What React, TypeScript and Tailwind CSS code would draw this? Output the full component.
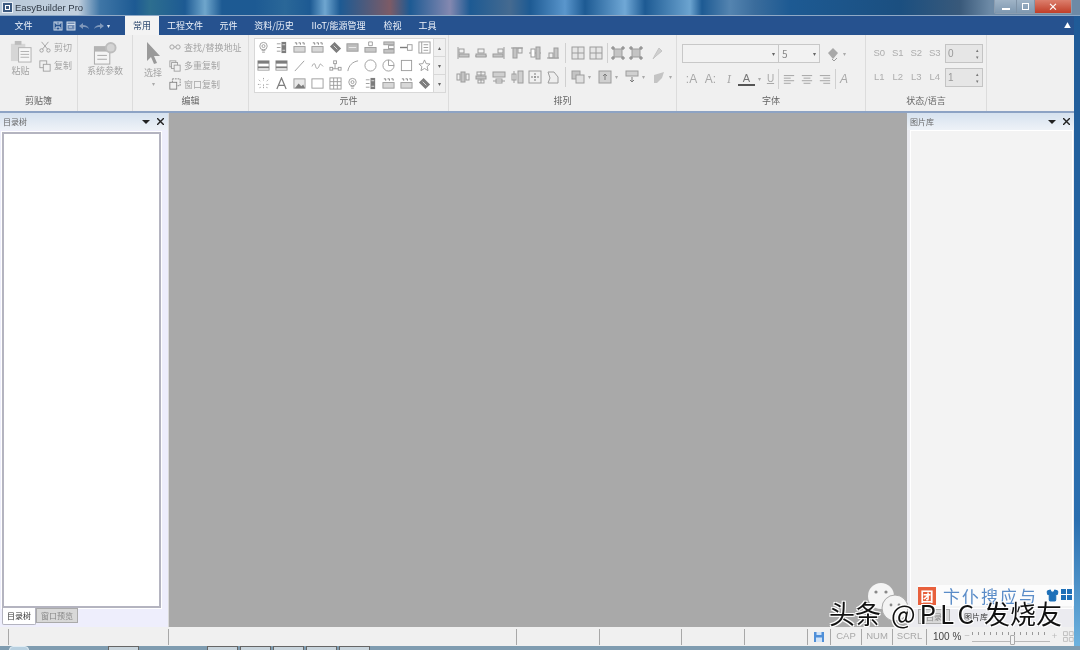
import type { ReactNode } from 'react';
import { Shirt } from 'lucide-react';

const font = "font-['Noto_Sans_CJK_SC','Noto_Sans',sans-serif]";

const tabs = [
  { label: '工程文件', w: 'w-[52px]' },
  { label: '元件', w: 'w-[35px]' },
  { label: '资料/历史', w: 'w-[56px]' },
  { label: 'IIoT/能源管理', w: 'w-[73px]' },
  { label: '检视', w: 'w-[35px]' },
  { label: '工具', w: 'w-[35px]' },
];

const g = '#9c9c9c';
const d = '#7d7d7d';

const Ico = ({ children, size = 14 }: { children: ReactNode; size?: number }) => (
  <svg width={size} height={size} viewBox="0 0 14 14" fill="none" stroke={g} strokeWidth="1" className="shrink-0">
    {children}
  </svg>
);

const bulb = <><circle cx="7" cy="5.5" r="4" /><circle cx="7" cy="5.5" r="1.6" /><path d="M5 10h4M5.5 12h3" /></>;
const meter = <><rect x="7" y="1" width="5" height="12" fill={d} stroke="none" /><path d="M2 3h4M2 7h4M2 11h4" /><path d="M8 4h3M8 10h3" stroke="#ddd" /></>;
const digits = <><path d="M2 2h2v2M6 2h2v2M10 2h2v2" stroke={d} /><rect x="1" y="6" width="12" height="6" fill="#d8d8d8" /></>;
const tag = <><path d="M1 6l5-5 7 7-5 5z" fill={d} stroke="none" /><path d="M5 5l4 4" stroke="#ddd" /></>;
const plate = <><rect x="1" y="3" width="12" height="8" fill="#bdbdbd" /><path d="M3 7h8" stroke="#eee" /></>;
const fnBox = <><path d="M5 1h4v4H5z" /><rect x="1" y="7" width="12" height="5" fill="#c8c8c8" /></>;
const stack = <><rect x="2" y="1" width="11" height="3" fill="#c4c4c4" /><rect x="7" y="5" width="6" height="3" /><rect x="2" y="9" width="11" height="4" fill="#c4c4c4" /></>;
const key = <><path d="M0 7h8" strokeWidth="1.5" stroke={d} /><rect x="8" y="4" width="5" height="6" /></>;
const listDoc = <><rect x="1" y="1" width="12" height="12" /><path d="M4 1v12M6 4h5M6 7h5M6 10h5" /></>;
const table1 = <><rect x="1" y="2" width="12" height="10" /><rect x="1" y="2" width="12" height="3" fill={d} stroke="none" /><rect x="1" y="8" width="12" height="2" fill={d} stroke="none" /></>;
const line = <path d="M2 13L12 2" />;
const wave = <path d="M1 8c2-4 3-4 4 0s3 2 4-1 2-1 4 1" />;
const nodes = <><rect x="1" y="9" width="3" height="3" /><rect x="10" y="9" width="3" height="3" /><rect x="5" y="2" width="3" height="3" /><path d="M6.5 5v5.5M4 10.5h6" /></>;
const arc = <path d="M2 13C3 7 7 3 13 2" />;
const circle = <circle cx="7" cy="7" r="6" />;
const pie = <><circle cx="7" cy="7" r="6" /><path d="M7 1v6h6" /></>;
const square = <rect x="1.5" y="1.5" width="11" height="11" />;
const star = <path d="M7 1l1.8 4 4.2.4-3.2 2.8 1 4.3L7 10.2 3.2 12.5l1-4.3L1 5.4 5.2 5z" />;
const burst = <path d="M7 1v3M7 8v5M2 3l2 2M12 3l-2 2M1 8h3M10 8h3M3 12l1-2M11 12l-1-2" strokeDasharray="1.5 1" />;
const letterA = <path d="M2 13L7 1l5 12M4 9h6" strokeWidth="1.3" stroke={d} />;
const image = <><rect x="1" y="2" width="12" height="10" fill="#e8e8e8" /><path d="M2 12l4-5 3 3 2-2 2 4z" fill={d} stroke="none" /></>;
const rect = <rect x="1" y="2" width="12" height="10" />;
const grid = <><rect x="1" y="1" width="12" height="12" /><path d="M5 1v12M9 1v12M1 5h12M1 9h12" /></>;

const gallery = [
  bulb, meter, digits, digits, tag, plate, fnBox, stack, key, listDoc,
  table1, table1, line, wave, nodes, arc, circle, pie, square, star,
  burst, letterA, image, rect, grid, bulb, meter, digits, digits, tag,
];

const arrangeTop = [
  <><path d="M2 1v12" /><rect x="3" y="8" width="10" height="3" fill="#c4c4c4" /><rect x="3" y="3" width="5" height="4" /></>,
  <><path d="M1 10h12" /><rect x="2" y="8" width="10" height="3" fill="#c4c4c4" /><rect x="4" y="3" width="6" height="4" /></>,
  <><path d="M12 1v12" /><rect x="1" y="8" width="10" height="3" fill="#c4c4c4" /><rect x="6" y="3" width="5" height="4" /></>,
  <><path d="M1 2h12" /><rect x="3" y="2" width="4" height="10" fill="#c4c4c4" /><rect x="8" y="2" width="4" height="5" /></>,
  <><path d="M1 7h12" /><rect x="3" y="3" width="4" height="8" fill="#fff" /><rect x="8" y="1" width="4" height="12" fill="#c4c4c4" /></>,
  <><path d="M1 12h12" /><rect x="3" y="7" width="4" height="5" /><rect x="8" y="2" width="4" height="10" fill="#c4c4c4" /></>,
];
const quad = <><rect x="1" y="1" width="12" height="12" fill="#e6e6e6" /><path d="M7 1v12M1 7h12" /></>;
const frame = <><rect x="3" y="3" width="8" height="8" fill="#c4c4c4" /><path d="M1 1h2v2H1zM11 1h2v2h-2zM1 11h2v2H1zM11 11h2v2h-2z" stroke={d} /></>;
const pin = <path d="M5 9L9 2l3 3-6 5-3 3z" fill="#d0d0d0" stroke="#c4c4c4" />;
const arrangeBottom = [
  <><rect x="1" y="4" width="3" height="6" /><rect x="5" y="2" width="4" height="10" fill="#c4c4c4" /><rect x="10" y="4" width="3" height="6" /></>,
  <><path d="M7 1v12" /><rect x="3" y="2" width="8" height="3" /><rect x="2" y="6" width="10" height="3" fill="#c4c4c4" /><rect x="4" y="10" width="6" height="3" /></>,
  <><rect x="1" y="2" width="12" height="5" fill="#d0d0d0" /><path d="M1 11h12" /><rect x="4" y="9" width="6" height="4" /></>,
  <><rect x="8" y="1" width="5" height="12" fill="#d0d0d0" /><path d="M4 1v12" /><rect x="2" y="4" width="4" height="6" /></>,
  <><rect x="1" y="1" width="12" height="12" /><path d="M7 3v8M3 7h8" stroke={d} strokeDasharray="2 1" /></>,
  <path d="M2 2h6l4 5v6H2l2-5z" fill="#eee" />,
];
const arrangeDrop = [
  <><rect x="1" y="1" width="8" height="8" fill="#c4c4c4" /><rect x="5" y="5" width="8" height="8" fill="#e0e0e0" /></>,
  <><rect x="1" y="1" width="12" height="12" fill="#d0d0d0" /><path d="M7 10V4M5 6l2-2 2 2" stroke={d} /></>,
  <><rect x="1" y="1" width="12" height="5" fill="#d0d0d0" /><path d="M7 7v5M5 10l2 2 2-2" stroke={d} /></>,
  <path d="M2 13V5l10-3-2 6-5 5z" fill="#c4c4c4" stroke="none" />,
];

const Sep = () => <span className="w-px h-[20px] bg-[#d0d0d0] mx-[1px]" />;
const Caret = () => <span className="text-[6px] leading-none text-[#aaa] mx-[3px]">▾</span>;

function RibbonGroup({ w, label, children }: { w: string; label: string; children: ReactNode }) {
  return (
    <div className={`${w} shrink-0 h-full flex flex-col border-r border-[#dcdcdc]`}>
      <div className="flex-1 min-h-0">{children}</div>
      <div className="h-[19px] pb-[2px] flex items-center justify-center text-[9px] leading-none text-[#666]">{label}</div>
    </div>
  );
}

const SmallCmd = ({ icon, label }: { icon: ReactNode; label: string }) => (
  <div className="h-[18.5px] flex items-center gap-[3px] text-[9px] leading-none text-[#a4a4a4] whitespace-nowrap">
    {icon}
    <span>{label}</span>
  </div>
);

function Spin({ value }: { value: string }) {
  return (
    <div className="w-[38px] h-[19px] ml-[1px] bg-[#e6e6e6] border border-[#c4c4c4] flex items-center justify-between pl-[2px] pr-[3px] text-[10px] text-[#999]">
      <span>{value}</span>
      <span className="flex flex-col text-[5px] leading-[7px] text-[#777]"><span>▴</span><span>▾</span></span>
    </div>
  );
}

function DockHeader({ title }: { title: string }) {
  return (
    <div className="h-[17px] shrink-0 flex items-center justify-between pl-[3px] pr-[4px] bg-[linear-gradient(#d6e2ef,#eef2f7)] text-[8px] text-[#666]">
      <span>{title}</span>
      <span className="flex items-center gap-[7px] text-[#222]">
        <span className="w-0 h-0 border-x-[4px] border-x-transparent border-t-[4px] border-t-[#222]" />
        <svg width="7" height="7" viewBox="0 0 7 7" stroke="#222" strokeWidth="1.4"><path d="M0 0l7 7M7 0L0 7" /></svg>
      </span>
    </div>
  );
}

const statusCells = ['w-[9px]', 'w-[160px]', 'w-[348px]', 'w-[83px]', 'w-[82px]', 'w-[63px]', 'w-[63px]'];

export default function App() {
  return (
    <div className={`w-[1080px] h-[650px] relative overflow-hidden flex flex-col blur-[0.4px] ${font} bg-[linear-gradient(#1f5a96,#2b6fb0_80%,#6fb4e0)]`}>
      {/* Title bar */}
      <div className="h-[16px] shrink-0 flex items-center border-b border-[#8fa9c6] bg-[linear-gradient(90deg,#b9c9d9_0,#c2d0de_78px,#3f76a6_100px,#1d5a93_135px,#2d6e8f_150px,#1d5a93_185px,#6fa6cc_205px,#1d5a93_222px,#1d5a93_255px,#2a6798_285px,#1d5a93_310px,#6fa6d0_325px,#1d5a93_340px,#7d5b66_390px,#1d5a93_410px,#8488b0_450px,#1d5a93_470px,#456a90_510px,#1d5a93_530px,#5a96cc_565px,#1d5a93_585px,#70a8d6_625px,#1d5a93_645px,#6ca4d0_690px,#1d5a93_702px,#5484b0_730px,#3a6c9c_755px,#1d5a93_790px,#1b4f80_900px,#39597a_960px,#6d8aa6_990px)]">
        <span className="w-[11px] h-[11px] ml-[2px] bg-[#3c5a80] border border-[#e8eef4] flex items-center justify-center shrink-0">
          <span className="w-[5px] h-[5px] border border-white" />
        </span>
        <span className="ml-[2px] font-['Liberation_Sans',sans-serif] text-[9.5px] leading-none text-[#303a46]">EasyBuilder Pro</span>
        <div className="ml-auto flex h-[14px] self-start mr-[8px] border border-t-0 border-[#8b9db0] rounded-b-[2px] overflow-hidden">
          <span className="w-[22px] bg-[linear-gradient(#9fb3c6,#7e98b0)] flex items-end justify-center pb-[3px] border-r border-[#7f93a7]"><span className="w-[8px] h-[2px] bg-white" /></span>
          <span className="w-[18px] bg-[linear-gradient(#9fb3c6,#7e98b0)] flex items-center justify-center border-r border-[#7f93a7]"><span className="w-[7px] h-[7px] border-[1.5px] border-white" /></span>
          <span className="w-[36px] bg-[linear-gradient(#dc7f6d,#c03e28)] flex items-center justify-center text-[10px] leading-none font-bold text-white">×</span>
        </div>
      </div>

      <div className="flex-1 min-h-0 flex">
        <div className="w-[1074px] shrink-0 h-full flex flex-col bg-[#f0f0f0]">
          {/* Menu tabs */}
          <div className="h-[19px] shrink-0 flex items-end bg-[#26528f] text-[9px] leading-none text-[#eef3fa]">
            <span className="w-[47px] h-full flex items-center justify-center">文件</span>
            <div className="w-[78px] h-full flex items-center gap-[3px] pl-[6px]">
              <svg width="10" height="10" viewBox="0 0 10 10" fill="none" stroke="#cfdbea"><rect x="1" y="1" width="8" height="8" /><path d="M3 1v2h4V1M3 9V6h4v3" /></svg>
              <svg width="10" height="10" viewBox="0 0 10 10" fill="none" stroke="#cfdbea"><rect x="1" y="1" width="8" height="8" fill="#6f8cb5" /><path d="M1 3.5h8M3 6h3" /></svg>
              <svg width="11" height="10" viewBox="0 0 11 10" fill="#7f98bb"><path d="M0 5l4-3v2c3 0 5 1 6 4-2-2-4-2-6-2v2z" /></svg>
              <svg width="11" height="10" viewBox="0 0 11 10" fill="#7f98bb"><path d="M11 5L7 2v2C4 4 2 5 1 8c2-2 4-2 6-2v2z" /></svg>
              <span className="text-[6px] text-[#dce6f2]">▾</span>
            </div>
            <span className="w-[34px] h-full flex items-center justify-center bg-[#f3f3f3] text-[#2f4a70]">常用</span>
            {tabs.map((t) => (
              <span key={t.label} className={`${t.w} h-full flex items-center justify-center whitespace-nowrap`}>{t.label}</span>
            ))}
            <span className="ml-auto mr-[3px] self-center text-[7px] text-white">▲</span>
          </div>

          {/* Ribbon */}
          <div className="h-[78px] shrink-0 flex border-b-2 border-[#8da3c4] bg-[#f0f0f0]">
            <RibbonGroup w="w-[78px]" label="剪贴簿">
              <div className="flex pt-[5px] pl-[9px] gap-[7px]">
                <div className="flex flex-col items-center gap-[3px] text-[9px] leading-none text-[#a4a4a4]">
                  <svg width="23" height="23" viewBox="0 0 24 24" fill="none" stroke="#b0b0b0">
                    <rect x="2" y="4" width="15" height="18" fill="#d6d6d6" stroke="none" />
                    <rect x="6" y="1" width="7" height="4" fill="#bcbcbc" stroke="none" />
                    <rect x="10" y="8" width="13" height="15" fill="#f6f6f6" />
                    <path d="M12 12h9M12 15h9M12 18h9" />
                  </svg>
                  <span>粘贴</span>
                </div>
                <div className="flex flex-col -mt-[2px]">
                  <SmallCmd label="剪切" icon={<Ico size={12}><circle cx="3" cy="11" r="2" /><circle cx="11" cy="11" r="2" /><path d="M4 9.5L11 1M10 9.5L3 1" /></Ico>} />
                  <SmallCmd label="复制" icon={<Ico size={12}><rect x="1" y="1" width="8" height="8" /><rect x="5" y="5" width="8" height="8" fill="#f0f0f0" /></Ico>} />
                </div>
              </div>
            </RibbonGroup>
            <div className="w-[55px] shrink-0 h-full border-r border-[#dcdcdc] pt-[6px] flex flex-col items-center text-[9px] leading-none text-[#a4a4a4]">
              <svg width="24" height="25" viewBox="0 0 24 26" fill="none" stroke="#a8a8a8">
                <rect x="1" y="6" width="16" height="18" fill="#f4f4f4" />
                <rect x="1" y="6" width="16" height="5" fill="#b4b4b4" stroke="none" />
                <path d="M4 15h10M4 19h10" />
                <circle cx="18" cy="7" r="5" fill="#d4d4d4" stroke="#bdbdbd" strokeWidth="2" />
              </svg>
              <span className="whitespace-nowrap">系统参数</span>
            </div>
            <RibbonGroup w="w-[116px]" label="编辑">
              <div className="flex pt-[3px] pl-[11px] gap-[7px]">
                <div className="flex flex-col items-center text-[9px] leading-none text-[#a4a4a4] pt-[4px] gap-[4px]">
                  <svg width="14" height="22" viewBox="0 0 14 22" fill="#9a9a9a"><path d="M1 0v19l4-4 3 7 3-1-3-7h6z" /></svg>
                  <span className="whitespace-nowrap">选择</span>
                  <span className="text-[6px] text-[#aaa]">▾</span>
                </div>
                <div className="flex flex-col">
                  <SmallCmd label="查找/替换地址" icon={<Ico size={12}><circle cx="3.5" cy="7" r="2.5" /><circle cx="10.5" cy="7" r="2.5" /><path d="M6 7h2" /></Ico>} />
                  <SmallCmd label="多重复制" icon={<Ico size={12}><rect x="1" y="1" width="7" height="7" /><rect x="3" y="3" width="7" height="7" fill="#f0f0f0" /><rect x="6" y="6" width="7" height="7" fill="#f0f0f0" /></Ico>} />
                  <SmallCmd label="窗口复制" icon={<Ico size={12}><rect x="4" y="1" width="9" height="8" strokeDasharray="2 1" stroke={d} /><rect x="1" y="5" width="8" height="8" fill="#f0f0f0" stroke={d} /></Ico>} />
                </div>
              </div>
            </RibbonGroup>
            <RibbonGroup w="w-[200px]" label="元件">
              <div className="flex pt-[3px] pl-[5px]">
                <div className="w-[180px] h-[55px] bg-white border border-[#d8d8d8] grid grid-cols-10 grid-rows-3 place-items-center">
                  {gallery.map((ic, i) => <Ico key={i} size={13}>{ic}</Ico>)}
                </div>
                <div className="w-[12px] h-[55px] flex flex-col border border-l-0 border-[#d8d8d8] text-[6px] text-[#666]">
                  <span className="flex-1 flex items-center justify-center border-b border-[#d8d8d8]">▴</span>
                  <span className="flex-1 flex items-center justify-center border-b border-[#d8d8d8]">▾</span>
                  <span className="flex-1 flex items-center justify-center">▾</span>
                </div>
              </div>
            </RibbonGroup>
            <RibbonGroup w="w-[228px]" label="排列">
              <div className="flex flex-col pl-[7px] pt-[11px] gap-[10px]">
                <div className="h-[14px] flex items-center gap-[4px]">
                  {arrangeTop.map((ic, i) => <Ico key={i}>{ic}</Ico>)}
                  <Sep />
                  <Ico>{quad}</Ico>
                  <Ico>{quad}</Ico>
                  <span className="w-px h-[20px] bg-[#d0d0d0] -mr-[1px]" />
                  <Ico>{frame}</Ico>
                  <Ico>{frame}</Ico>
                  <span className="ml-[3px]"><Ico>{pin}</Ico></span>
                </div>
                <div className="h-[14px] flex items-center gap-[4px]">
                  {arrangeBottom.map((ic, i) => <Ico key={i}>{ic}</Ico>)}
                  <Sep />
                  {arrangeDrop.map((ic, i) => (
                    <span key={i} className="flex items-center w-[22px] mr-[1px]"><Ico>{ic}</Ico><Caret /></span>
                  ))}
                </div>
              </div>
            </RibbonGroup>
            <RibbonGroup w="w-[189px]" label="字体">
              <div className="flex flex-col pl-[5px] pt-[9px] gap-[7px]">
                <div className="flex items-center h-[19px]">
                  <div className="w-[97px] h-[19px] border border-[#c8c8c8] bg-[#f2f2f2] flex items-center justify-end pr-[3px] text-[6px] text-[#666]">▾</div>
                  <div className="w-[41px] h-[19px] border border-l-0 border-[#c8c8c8] bg-[#f2f2f2] flex items-center justify-between px-[3px] text-[10px] text-[#888]"><span>5</span><span className="text-[6px] text-[#666]">▾</span></div>
                  <span className="ml-[6px] flex items-center">
                    <Ico><path d="M2 6l5-5 5 5-5 6z" fill="#a8a8a8" stroke="none" /><path d="M6 12l2 2 3-3" /></Ico>
                    <Caret />
                  </span>
                </div>
                <div className="flex items-center h-[17px] text-[12px] leading-none text-[#a8a8a8] font-['Liberation_Sans',sans-serif]">
                  <span className="w-[19px] text-center">:A</span>
                  <span className="w-[19px] text-center">A:</span>
                  <span className="w-[18px] text-center italic font-serif">I</span>
                  <span className="w-[17px] text-center text-[#777] border-b-2 border-[#555] leading-[12px] text-[11px]">A</span>
                  <Caret />
                  <span className="w-[13px] text-center underline text-[10px]">U</span>
                  <Sep />
                  {[0, 1, 2].map((i) => (
                    <span key={i} className="w-[19px] -ml-[1px] first:ml-0 flex justify-center">
                      <Ico size={12}><path d={i === 0 ? 'M1 3h12M1 6h8M1 9h12M1 12h8' : i === 1 ? 'M1 3h12M3 6h8M1 9h12M3 12h8' : 'M1 3h12M5 6h8M1 9h12M5 12h8'} /></Ico>
                    </span>
                  ))}
                  <Sep />
                  <span className="italic ml-[3px]">A</span>
                </div>
              </div>
            </RibbonGroup>
            <RibbonGroup w="w-[121px]" label="状态/语言">
              <div className="flex flex-col pl-[4px] pt-[9px] gap-[5px] font-['Liberation_Sans',sans-serif] text-[9.5px] text-[#adadad]">
                {[['S0', 'S1', 'S2', 'S3', '0'], ['L1', 'L2', 'L3', 'L4', '1']].map((row) => (
                  <div key={row[0]} className="flex items-center h-[19px]">
                    {row.slice(0, 4).map((s) => <span key={s} className="w-[18.5px] text-center">{s}</span>)}
                    <Spin value={row[4]} />
                  </div>
                ))}
              </div>
            </RibbonGroup>
          </div>

          {/* Main area */}
          <div className="flex-1 min-h-0 flex">
            <div className="w-[168px] shrink-0 flex flex-col bg-[#eeeefc]">
              <DockHeader title="目录树" />
              <div className="flex-1 mx-[2px] mt-[2px] mr-[7px] bg-white border-2 border-[#b4b4c0] outline outline-1 outline-white" />
              <div className="h-[18px] shrink-0 mb-[1px] flex items-start pl-[2px] text-[8px] leading-none">
                <span className="w-[34px] h-[17px] bg-white border border-t-0 border-[#b4b4c0] rounded-b-[2px] flex items-center justify-center text-[#333]">目录树</span>
                <span className="w-[42px] h-[15px] bg-[#d8d8d8] border border-[#aaa] flex items-center justify-center text-[#888]">窗口预览</span>
              </div>
            </div>
            <div className="w-px bg-[#dadada]" />
            <div className="flex-1 bg-[#a9a9a9]" />
            <div className="w-[167px] shrink-0 flex flex-col bg-[#ebebf0]">
              <DockHeader title="图片库" />
              <div className="flex-1 ml-[3px] mr-px bg-[#f3f3f3] border border-white" />
              <div className="h-[18px] shrink-0 flex items-start pl-[11px] text-[8px] leading-none">
                <span className="w-[32px] h-[15px] bg-[#d8d8d8] border border-[#aaa] flex items-center justify-center text-[#888]">目录</span>
                <span className="w-[36px] h-[15px] ml-[8px] flex items-center justify-center text-[#333]">图片库</span>
              </div>
            </div>
          </div>

          {/* Status bar */}
          <div className="h-[19px] shrink-0 flex items-center bg-[#f0f0f0] font-['Liberation_Sans',sans-serif] text-[9.5px] text-[#a8a8a8]">
            {statusCells.map((w, i) => (
              <div key={i} className={`${w} h-[16px] shrink-0 border-r border-[#a8a8a8]`} />
            ))}
            <div className="w-[23px] h-[16px] shrink-0 border-r border-[#a8a8a8] flex items-center justify-center">
              <svg width="10" height="10" viewBox="0 0 10 10"><rect width="10" height="10" fill="#4f8fd8" /><rect x="2.5" y="0" width="5" height="3" fill="#cfe2f7" /><rect x="2" y="5.5" width="6" height="4.5" fill="#cfe2f7" /></svg>
            </div>
            {['CAP', 'NUM', 'SCRL'].map((t, i) => (
              <div key={t} className={`${i === 2 ? 'w-[34px]' : 'w-[31px]'} h-[16px] shrink-0 border-r border-[#a8a8a8] flex items-center justify-center`}>{t}</div>
            ))}
            <span className="ml-[6px] w-[32px] whitespace-nowrap text-[10px] text-[#444]">100 %</span>
            <span className="text-[#bbb]">−</span>
            <div className="relative w-[80px] h-[10px] mx-[2px] border-b border-[#b8b8b8] bg-[repeating-linear-gradient(90deg,#999_0,#999_1px,transparent_1px,transparent_6px)] bg-[length:100%_3px] bg-no-repeat">
              <span className="absolute left-[38px] top-[3px] w-[5px] h-[10px] bg-[#f4f4f4] border border-[#aaa] rounded-[1px]" />
            </div>
            <span className="text-[#bbb]">+</span>
            <svg className="ml-[6px]" width="11" height="11" viewBox="0 0 11 11" fill="none" stroke="#c0c0c0"><path d="M.5.5h4v4h-4zM6.5.5h4v4h-4zM.5 6.5h4v4h-4zM6.5 6.5h4v4h-4z" /></svg>
          </div>
        </div>
      </div>

      {/* Taskbar sliver */}
      <div className="h-[4px] shrink-0 flex bg-[#7f9cb0]">
        <span className="w-[20px] h-[8px] ml-[9px] rounded-full bg-[#b8d0e0] border border-[#e0ecf4]" />
        <span className="w-[31px] ml-[79px] border border-b-0 border-[#666] bg-[#c8d4dc]" />
        <div className="flex ml-[68px] gap-[2px]">
          {[0, 1, 2, 3, 4].map((i) => <span key={i} className="w-[31px] border border-b-0 border-[#666] bg-[#c8d4dc]" />)}
        </div>
      </div>

      {/* Watermark overlay */}
      <div className="absolute left-[918px] top-[585px] w-[156px] h-[21px] bg-white/70 flex items-center">
        <span className="w-[18px] h-[18px] bg-[#e8603c] text-white text-[13px] leading-[18px] text-center font-bold">团</span>
        <span className="ml-[7px] text-[17px] leading-none tracking-[2px] text-[#5a8cc8] whitespace-nowrap">卞仆搜应与</span>
        <Shirt size={13} className="absolute left-[128px] top-[4px] text-[#1e70b8] fill-[#1e70b8]" />
        <span className="absolute left-[143px] top-[4px] w-[11px] h-[11px] grid grid-cols-2 gap-px">
          <span className="bg-[#1e70b8]" /><span className="bg-[#1e70b8]" /><span className="bg-[#1e70b8]" /><span className="bg-[#1e70b8]" />
        </span>
      </div>
      <svg className="absolute left-[866px] top-[582px]" width="44" height="44" viewBox="0 0 44 44">
        <ellipse cx="15" cy="14" rx="13" ry="13" fill="#f4f4f4" />
        <ellipse cx="29" cy="26" rx="13" ry="13" fill="#f4f4f4" stroke="#a9a9a9" strokeWidth="1" />
        <circle cx="10" cy="10" r="1.6" fill="#888" /><circle cx="20" cy="10" r="1.6" fill="#888" />
        <circle cx="25" cy="23" r="1.4" fill="#888" /><circle cx="33" cy="23" r="1.4" fill="#888" />
      </svg>
      <div className="absolute left-[829px] top-[596px] flex items-center text-[26px] leading-[34px] text-[#111] whitespace-nowrap [text-shadow:1px_1px_0_#fff,-1px_-1px_0_#fff,1px_-1px_0_#fff,-1px_1px_0_#fff]">
        <span>头条</span>
        <span className="ml-[10px] w-[93px] tracking-[4px]">@PLC</span>
        <span>发烧友</span>
      </div>
    </div>
  );
}
